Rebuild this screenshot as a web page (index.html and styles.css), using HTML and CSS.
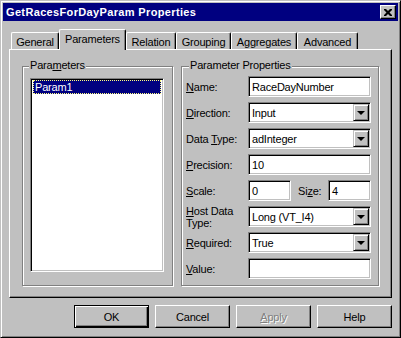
FILE: index.html
```html
<!DOCTYPE html>
<html lang="en">
  <head>
    <meta charset="UTF-8" />
    <title>GetRacesForDayParam Properties</title>
    <link rel="stylesheet" href="styles.css">
  </head>
  <body>
    <div class="window">
      <div class="titlebar">
        <span class="title">GetRacesForDayParam Properties</span>
        <button class="close">
          <svg width="8" height="7" viewBox="0 0 8 7"><path d="M0 0h2l2 2 2-2h2v1L5.5 3.5 8 6v1H6L4 5 2 7H0V6l2.5-2.5L0 1z" fill="#000"/></svg>
        </button>
      </div>

      <div class="tabs">
        <div class="tab tab-general">General</div>
        <div class="tab tab-params active">Parameters</div>
        <div class="tab tab-relation">Relation</div>
        <div class="tab tab-grouping">Grouping</div>
        <div class="tab tab-aggregates">Aggregates</div>
        <div class="tab tab-advanced">Advanced</div>
      </div>

      <div class="panel">
        <div class="group group-list">
          <div class="group-title">Para<u>m</u>eters</div>
          <div class="listbox">
            <div class="item selected">Param1</div>
          </div>
        </div>

        <div class="group group-props">
          <div class="group-title">Parameter Properties</div>
          <div class="form">
            <label><span><u>N</u>ame:</span></label>
            <div class="field">RaceDayNumber</div>

            <label><span><u>D</u>irection:</span></label>
            <div class="field combo">Input<span class="drop"><i></i></span></div>

            <label><span>Data <u>T</u>ype:</span></label>
            <div class="field combo">adInteger<span class="drop"><i></i></span></div>

            <label><span><u>P</u>recision:</span></label>
            <div class="field">10</div>

            <label><span><u>S</u>cale:</span></label>
            <div class="pair">
              <div class="field small">0</div>
              <label><span>Si<u>z</u>e:</span></label>
              <div class="field small">4</div>
            </div>

            <label class="two-lines"><span><u>H</u>ost Data<br />Type:</span></label>
            <div class="field combo">Long (VT_I4)<span class="drop"><i></i></span></div>

            <label><span><u>R</u>equired:</span></label>
            <div class="field combo">True<span class="drop"><i></i></span></div>

            <label><span><u>V</u>alue:</span></label>
            <div class="field"></div>
          </div>
        </div>
      </div>

      <div class="buttons">
        <button class="btn default">OK</button>
        <button class="btn">Cancel</button>
        <button class="btn disabled"><u>A</u>pply</button>
        <button class="btn">Help</button>
      </div>
    </div>
  </body>
</html>
```

FILE: styles.css
```css
body {
  margin: 0;
  background: #c0c0c0;
  font-family: "Liberation Sans", Arial, sans-serif;
  font-size: 11px;
  letter-spacing: -0.2px;
  color: #000;
}
u {
  text-decoration: underline;
  text-underline-offset: 1px;
}
.window {
  width: 401px;
  height: 338px;
  box-sizing: border-box;
  background: #c0c0c0;
  border: 1px solid;
  border-color: #c0c0c0 #000 #000 #c0c0c0;
  box-shadow: inset 1px 1px 0 #fff, inset -1px -1px 0 #808080;
  padding: 2px;
}
.titlebar {
  height: 18px;
  background: #000080;
  color: #fff;
  display: flex;
  align-items: center;
  justify-content: space-between;
}
.title {
  font-weight: bold;
  letter-spacing: 0.35px;
  padding-left: 3px;
}
.close {
  width: 16px;
  height: 14px;
  margin-right: 2px;
  padding: 0;
  box-sizing: border-box;
  background: #c0c0c0;
  border: 1px solid;
  border-color: #fff #000 #000 #fff;
  box-shadow: inset -1px -1px 0 #808080;
  display: flex;
  align-items: center;
  justify-content: center;
}

/* tabs */
.tabs {
  display: flex;
  align-items: flex-end;
  height: 20px;
  margin-top: 8px;
  padding-left: 8px;
}
.tab {
  height: 17px;
  box-sizing: border-box;
  border: 1px solid;
  border-bottom: none;
  border-color: #fff #000 #000 #fff;
  border-top-left-radius: 2px;
  border-top-right-radius: 2px;
  box-shadow: inset -1px 0 0 #808080;
  display: flex;
  justify-content: center;
  align-items: center;
  padding-top: 1px;
}
.tab-general { width: 48px; }
.tab-params { width: 67px; }
.tab-relation { width: 50px; }
.tab-grouping { width: 55px; }
.tab-aggregates { width: 66px; }
.tab-advanced { width: 61px; }
.tab.active {
  height: 21px;
  margin-bottom: -1px;
  padding-bottom: 3px;
  position: relative;
  z-index: 1;
  background: #c0c0c0;
}

.panel {
  height: 249px;
  margin: 0 6px;
  box-sizing: border-box;
  border: 1px solid;
  border-color: #fff #000 #000 #fff;
  box-shadow: inset -1px -1px 0 #808080;
  display: flex;
  gap: 8px;
  padding: 16px 12px 0 12px;
}

/* group boxes */
.group {
  height: 220px;
  box-sizing: border-box;
  border: 1px solid #808080;
  box-shadow: 1px 1px 0 #fff, inset 1px 1px 0 #fff;
}
.group-list {
  width: 151px;
}
.group-props {
  width: 198px;
}
.group-title {
  width: fit-content;
  height: 13px;
  line-height: 13px;
  margin: -8px 0 0 6px;
  padding: 0 1px;
  background: #c0c0c0;
}
.group-props .group-title {
  margin-left: 7px;
}

.listbox {
  width: 134px;
  height: 194px;
  margin: 6px 0 0 7px;
  box-sizing: border-box;
  background: #fff;
  border: 1px solid;
  border-color: #808080 #fff #fff #808080;
  box-shadow: inset 1px 1px 0 #000, inset -1px -1px 0 #c0c0c0;
  padding: 1px 2px;
}
.item {
  height: 14px;
  line-height: 12px;
  box-sizing: border-box;
  padding-left: 1px;
}
.item.selected {
  background: #000080;
  color: #fff;
  border: 1px dotted #ffff80;
}

/* form */
.form {
  display: grid;
  grid-template-columns: 62px 123px;
  grid-auto-rows: 21px;
  row-gap: 5px;
  margin-top: 4px;
  padding-left: 4px;
}
.form label {
  display: flex;
  align-items: center;
  white-space: nowrap;
}
.form .two-lines {
  line-height: 12px;
}
.field {
  height: 21px;
  box-sizing: border-box;
  background: #fff;
  border: 1px solid;
  border-color: #808080 #fff #fff #808080;
  box-shadow: inset 1px 1px 0 #000, inset -1px -1px 0 #c0c0c0;
  padding: 0 2px 0 3px;
  display: flex;
  align-items: center;
  justify-content: space-between;
}
.pair {
  display: flex;
  align-items: center;
}
.pair label {
  width: 37px;
  padding-left: 7px;
  box-sizing: border-box;
}
.field.small {
  width: 43px;
}
.drop {
  width: 16px;
  height: 17px;
  box-sizing: border-box;
  background: #c0c0c0;
  border: 1px solid;
  border-color: #c0c0c0 #000 #000 #c0c0c0;
  box-shadow: inset 1px 1px 0 #fff, inset -1px -1px 0 #808080;
  margin-right: -1px;
  display: flex;
  align-items: center;
  justify-content: center;
}
.drop i {
  width: 0;
  height: 0;
  border-left: 4px solid transparent;
  border-right: 4px solid transparent;
  border-top: 4px solid #000;
  margin-top: 1px;
}

/* buttons */
.buttons {
  display: flex;
  justify-content: flex-end;
  gap: 6px;
  margin-top: 7px;
  padding-right: 6px;
}
.btn {
  width: 75px;
  height: 23px;
  padding: 0;
  box-sizing: border-box;
  font-family: inherit;
  font-size: 11px;
  letter-spacing: inherit;
  color: #000;
  background: #c0c0c0;
  border: 1px solid;
  border-color: #fff #000 #000 #fff;
  box-shadow: inset -1px -1px 0 #808080;
}
.btn.default {
  border-color: #000;
  box-shadow: inset 1px 1px 0 #fff, inset -1px -1px 0 #000, inset -2px -2px 0 #808080;
}
.btn.disabled {
  color: #808080;
  text-shadow: 1px 1px 0 #fff;
}
```
